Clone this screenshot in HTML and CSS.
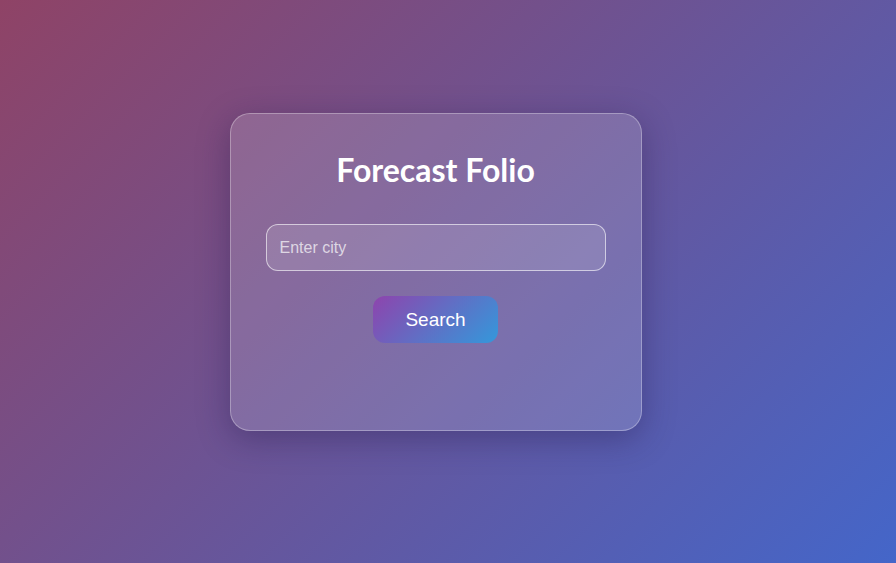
FILE: index.html
```html
<!DOCTYPE html>
<html lang="en">
<head>
<meta charset="utf-8">
<title>Forecast Folio</title>
<link rel="stylesheet" href="styles.css">
</head>
<body>
<main class="page">
  <section class="card">
    <h1 class="title">Forecast Folio</h1>
    <input class="city-input" type="text" placeholder="Enter city">
    <button class="search-btn" type="button">Search</button>
    <div class="result"></div>
  </section>
</main>
</body>
</html>
```

FILE: styles.css
```css
* { box-sizing: border-box; }
html, body { margin: 0; height: 100%; }
body {
  background: linear-gradient(135deg, #8f4366 0%, #4466c9 100%);
  font-family: "Liberation Sans", Arial, sans-serif;
}
.page {
  min-height: 100vh;
  display: flex;
  align-items: center;
  justify-content: center;
  padding: 0 25px 19px 0;
}
.card {
  width: 412px;
  height: 318px;
  padding: 36px 35px 35px;
  border-radius: 20px;
  background: rgba(255, 255, 255, 0.15);
  border: 1px solid rgba(255, 255, 255, 0.3);
  box-shadow: 0 8px 32px rgba(31, 20, 70, 0.35);
  display: flex;
  flex-direction: column;
  align-items: center;
}
.title {
  margin: 0 0 34px;
  font-family: Lato, "Open Sans", sans-serif;
  font-weight: 700;
  font-size: 32px;
  line-height: 40px;
  color: #fff;
}
.city-input {
  width: 340px;
  height: 47px;
  padding: 0 13px;
  border-radius: 12px;
  border: 1px solid rgba(255, 255, 255, 0.6);
  background: rgba(255, 255, 255, 0.12);
  color: #fff;
  font-family: "Liberation Sans", Arial, sans-serif;
  font-size: 16px;
  outline: none;
}
.city-input::placeholder { color: rgba(255, 255, 255, 0.7); }
.search-btn {
  margin-top: 25px;
  width: 125px;
  height: 47px;
  border: none;
  border-radius: 12px;
  background: linear-gradient(135deg, #8e44ad 0%, #3498db 100%);
  color: #fff;
  font-family: "Liberation Sans", Arial, sans-serif;
  font-size: 19px;
}
```
